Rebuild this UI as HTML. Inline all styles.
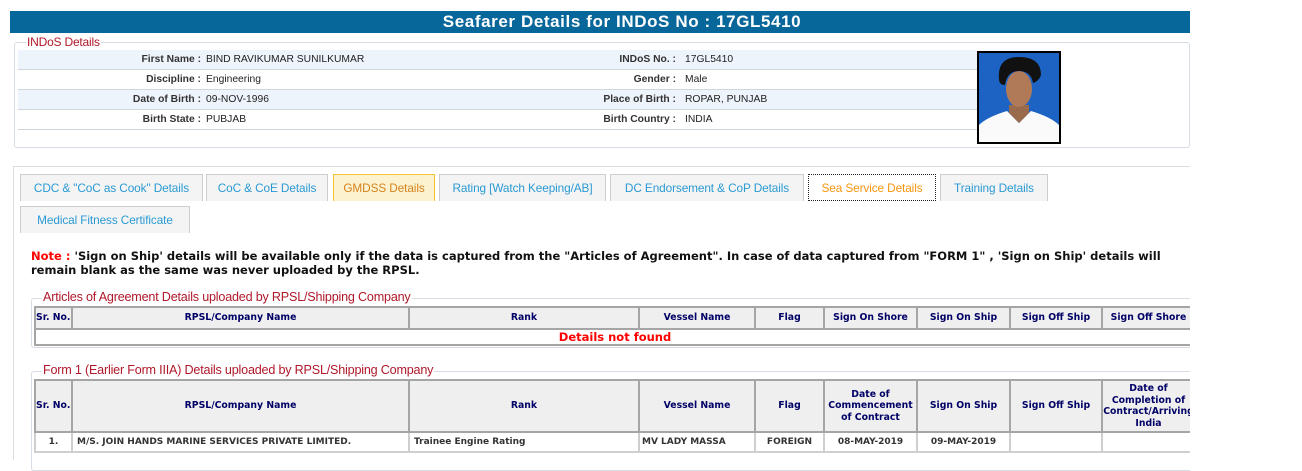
<!DOCTYPE html>
<html><head><style>
*{margin:0;padding:0;box-sizing:border-box}
body{width:1302px;height:460px;overflow:hidden;background:#fff;position:relative;font-family:"Liberation Sans",Arial,sans-serif}
.a{position:absolute}
.hdr{left:10px;top:11px;width:1180px;height:22px;background:#08679a;color:#fff;font-weight:bold;font-size:17px;letter-spacing:0.6px;text-align:center;line-height:22px;padding-left:44px}
.fs{border:1px solid #d6dde4;border-radius:3px}
.leg{background:#fff;color:#b0182a;font-size:12.6px;padding:0 1px;line-height:13px;letter-spacing:-0.2px}
.row{left:18px;width:959px;height:20px;border-bottom:1px solid #cfd6dc;font-size:10.3px;line-height:19px;color:#222}
.row.b{background:#eef4fc}
.lb{position:absolute;text-align:right;font-weight:bold;color:#333}
.l1{left:0;width:183px}
.l2{left:480px;width:178px}
.v1{position:absolute;left:188px}
.v2{position:absolute;left:667px}
.tab{height:27px;background:#f4f4f4;border:1px solid #cdcdcd;border-bottom:none;color:#2a9ad3;font-size:11.8px;line-height:27px;text-align:center;letter-spacing:-0.1px}
.note{left:31px;top:249px;font-family:"DejaVu Sans",Verdana,sans-serif;font-weight:bold;font-size:11.5px;line-height:14px;color:#111;width:1150px}
.clip{overflow:hidden;width:1156px}
table{border-collapse:collapse;font-family:"DejaVu Sans",Verdana,sans-serif;font-size:9.3px;font-weight:bold;color:#000066;table-layout:fixed}
th{background:#efefef;border:2px solid #a5a5a5;text-align:center;line-height:11.5px;font-weight:bold}
td{border:2px solid #cfcfcf;color:#333;font-size:9px}
</style></head><body>
<div class="a hdr">Seafarer Details for INDoS No : 17GL5410</div>

<div class="a fs" style="left:14px;top:42px;width:1176px;height:106px"></div>
<div class="a leg" style="left:26px;top:36px;font-size:12px">INDoS Details</div>

<div class="a row b" style="top:50px"><span class="lb l1">First Name :</span><span class="v1">BIND RAVIKUMAR SUNILKUMAR</span><span class="lb l2">INDoS No. :</span><span class="v2">17GL5410</span></div>
<div class="a row" style="top:70px"><span class="lb l1">Discipline :</span><span class="v1">Engineering</span><span class="lb l2">Gender :</span><span class="v2">Male</span></div>
<div class="a row b" style="top:90px"><span class="lb l1">Date of Birth :</span><span class="v1">09-NOV-1996</span><span class="lb l2">Place of Birth :</span><span class="v2">ROPAR, PUNJAB</span></div>
<div class="a row" style="top:110px"><span class="lb l1">Birth State :</span><span class="v1">PUBJAB</span><span class="lb l2">Birth Country :</span><span class="v2">INDIA</span></div>

<svg class="a" style="left:977px;top:51px" width="84" height="93" viewBox="0 0 84 93">
<rect x="0" y="0" width="84" height="93" fill="#000"/>
<rect x="2" y="2" width="80" height="89" fill="#1c63c4"/>
<path d="M2 91 L2 74 Q10 66 30 60 L42 72 L54 60 Q74 66 82 74 L82 91Z" fill="#fafafa"/>
<path d="M32 54 L32 62 L42 72 L52 62 L52 54Z" fill="#9a6a4c"/>
<ellipse cx="42" cy="38" rx="13" ry="18" fill="#b07a58"/>
<path d="M22 28 Q20 6 42 6 Q64 6 64 24 Q62 30 56 32 Q54 20 42 20 Q30 20 28 34 Q22 34 22 28Z" fill="#111"/>
</svg>

<div class="a" style="left:13px;top:166px;width:1177px;height:294px;border-top:1px solid #ddd;border-left:1px solid #ddd"></div>

<div class="a tab" style="left:20px;top:174px;width:183px">CDC &amp; "CoC as Cook" Details</div>
<div class="a tab" style="left:206px;top:174px;width:122px">CoC &amp; CoE Details</div>
<div class="a tab" style="left:333px;top:174px;width:102px;background:#fdf2cf;border-color:#f2c33a;color:#d4831d">GMDSS Details</div>
<div class="a tab" style="left:439px;top:174px;width:167px">Rating [Watch Keeping/AB]</div>
<div class="a tab" style="left:610px;top:174px;width:194px">DC Endorsement &amp; CoP Details</div>
<div class="a tab" style="left:808px;top:174px;width:128px;background:#fff;border:1px dotted #222;height:27px;color:#f7960e">Sea Service Details</div>
<div class="a tab" style="left:940px;top:174px;width:108px">Training Details</div>
<div class="a tab" style="left:20px;top:206px;width:170px">Medical Fitness Certificate</div>

<div class="a note"><span style="color:#f00">Note :</span> 'Sign on Ship' details will be available only if the data is captured from the "Articles of Agreement". In case of data captured from "FORM 1" , 'Sign on Ship' details will remain blank as the same was never uploaded by the RPSL.</div>

<div class="a fs" style="left:31px;top:298px;width:1159px;height:50px;border-right:none;border-radius:3px 0 0 3px"></div>
<div class="a leg" style="left:42px;top:291px">Articles of Agreement Details uploaded by RPSL/Shipping Company</div>
<div class="a clip" style="left:34px;top:306px;height:40px">
<table style="width:1160px">
<colgroup><col style="width:37px"><col style="width:337px"><col style="width:230px"><col style="width:116px"><col style="width:69px"><col style="width:93px"><col style="width:93px"><col style="width:92px"><col style="width:93px"></colgroup>
<tr style="height:22px"><th style="text-align:left">Sr. No.</th><th>RPSL/Company Name</th><th>Rank</th><th>Vessel Name</th><th>Flag</th><th>Sign On Shore</th><th>Sign On Ship</th><th>Sign Off Ship</th><th>Sign Off Shore</th></tr>
<tr style="height:16px"><td colspan="9" style="border-color:#a5a5a5;text-align:center;color:#f00;font-size:11.5px;line-height:12px">Details not found</td></tr>
</table></div>

<div class="a fs" style="left:31px;top:371px;width:1159px;height:100px;border-right:none;border-radius:3px 0 0 3px"></div>
<div class="a leg" style="left:42px;top:364px">Form 1 (Earlier Form IIIA) Details uploaded by RPSL/Shipping Company</div>
<div class="a clip" style="left:34px;top:379px;height:81px">
<table style="width:1160px">
<colgroup><col style="width:37px"><col style="width:337px"><col style="width:230px"><col style="width:116px"><col style="width:69px"><col style="width:93px"><col style="width:93px"><col style="width:92px"><col style="width:93px"></colgroup>
<tr style="height:52px"><th style="text-align:left">Sr. No.</th><th>RPSL/Company Name</th><th>Rank</th><th>Vessel Name</th><th>Flag</th><th>Date of Commencement of Contract</th><th>Sign On Ship</th><th>Sign Off Ship</th><th>Date of Completion of Contract/Arriving India</th></tr>
<tr style="height:20px"><td style="text-align:center">1.</td><td style="padding-left:4px">M/S. JOIN HANDS MARINE SERVICES PRIVATE LIMITED.</td><td style="padding-left:4px">Trainee Engine Rating</td><td style="padding-left:2px">MV LADY MASSA</td><td style="text-align:center">FOREIGN</td><td style="text-align:center">08-MAY-2019</td><td style="text-align:center">09-MAY-2019</td><td></td><td></td></tr>
</table></div>
</body></html>
